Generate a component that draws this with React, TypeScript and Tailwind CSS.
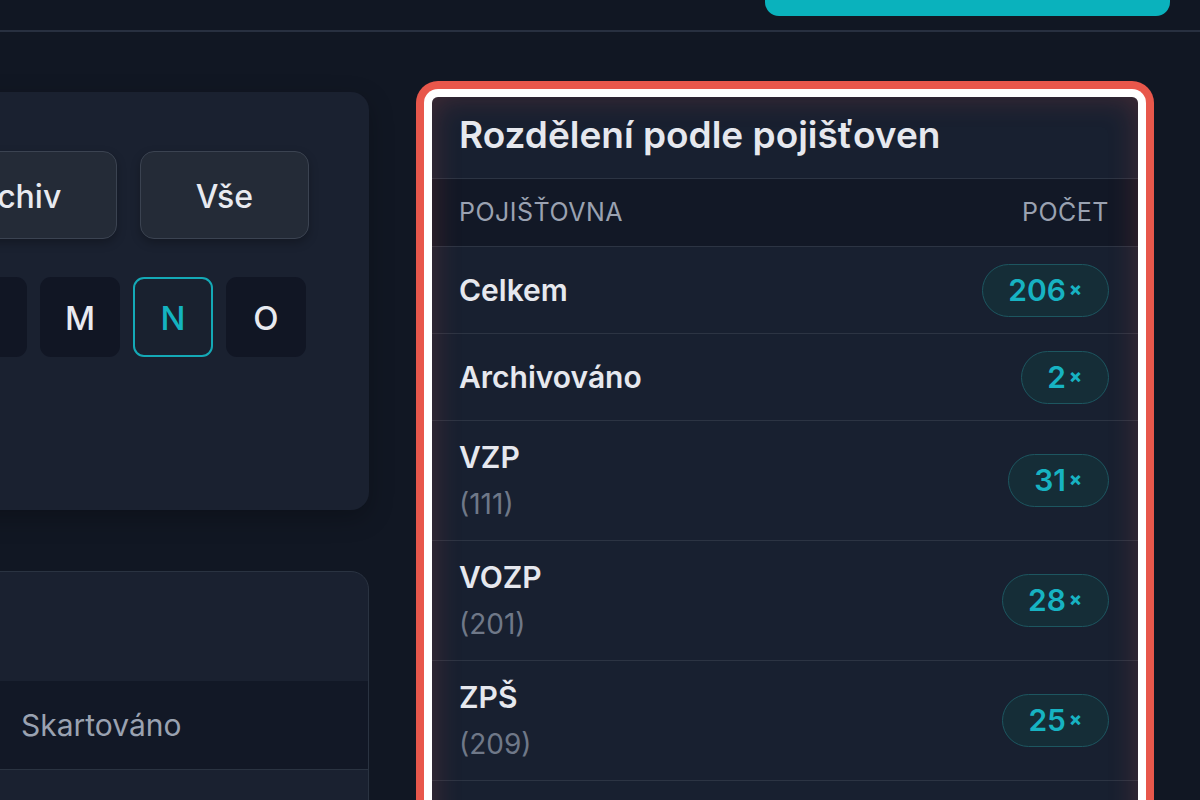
import React from 'react'

const letters = ['H', 'I', 'J', 'K', 'L', 'M', 'N', 'O']

const rows = [
    { name: 'Celkem', count: 206 },
    { name: 'Archivováno', count: 2 },
    { name: 'VZP', code: '111', count: 31 },
    { name: 'VOZP', code: '201', count: 28 },
    { name: 'ZPŠ', code: '209', count: 25 },
    { name: 'OZP', code: '207', count: 22 },
    { name: 'ČPZP', code: '205', count: 19 },
]

const Badge = ({ value }: { value: number }) => (
    <span className="flex h-[53px] items-center rounded-full border-[1.5px] border-[#1d5660] bg-[#152d37] pl-[25px] pr-[26px] text-[30px] font-semibold text-[#17b3c2]">
        {value}
        <span className="ml-[3px] text-[19px] font-extrabold">×</span>
    </span>
)

export default function App() {
    return (
        <div
            className="min-h-screen overflow-hidden bg-[#111723] text-[#e6e8ee]"
            style={{ fontFamily: 'Inter, "Noto Sans", sans-serif' }}
        >
            <header className="flex h-[32px] justify-end border-b-2 border-[#283040] pr-[30px]">
                <button className="-mt-[44px] h-[60px] w-[405px] rounded-[14px] bg-[#0ab2bd]" />
            </header>

            <main className="flex items-start gap-[47px] pt-[49px]">
                {/* left column, mostly cut off */}
                <div className="-ml-[449px] mt-[11px] flex w-[818px] shrink-0 flex-col gap-[61px]">
                    <section className="h-[418px] rounded-[18px] bg-[#1a2130] pl-[24px] pt-[59px] shadow-[0_8px_24px_rgba(0,0,0,0.25)]">
                        <div className="flex gap-[23px]">
                            {['Aktivní', 'Archiv', 'Vše'].map((label, i) => (
                                <button
                                    key={label}
                                    className={`h-[88px] rounded-[14px] border border-[#3b4351] bg-[#242b37] pt-[3px] text-[32px] font-medium text-[#e8eaf0] shadow-[0_4px_10px_rgba(0,0,0,0.25)] ${
                                        i === 0 ? 'w-[309px]' : i === 1 ? 'w-[210px]' : 'w-[169px]'
                                    }`}
                                >
                                    {label}
                                </button>
                            ))}
                        </div>
                        <div className="mt-[38px] flex gap-[13px]">
                            {letters.map((l) => (
                                <div
                                    key={l}
                                    className={`flex h-[80px] w-[80px] items-center justify-center rounded-[11px] pt-[3px] text-[33px] font-medium ${
                                        l === 'N'
                                            ? 'border-2 border-[#14a9b6] bg-[#19212f] text-[#14b3c0]'
                                            : 'bg-[#111624] text-[#e8eaf0]'
                                    }`}
                                >
                                    {l}
                                </div>
                            ))}
                        </div>
                    </section>

                    <section className="overflow-hidden rounded-[18px] border border-[#2a3341] bg-[#1a2130]">
                        <div className="h-[109px]" />
                        <div className="flex h-[88px] items-center bg-[#121826] pl-[24px] text-[30px] text-[#9aa2b1]">
                            <span className="w-[445px]">Pacient</span>
                            <span>Skartováno</span>
                        </div>
                        <div className="h-[80px] border-t border-[#2a3341]" />
                    </section>
                </div>

                {/* right column: highlighted insurer breakdown */}
                <div className="w-[738px] shrink-0 rounded-[22px] bg-[#e8574b] p-[8px]">
                    <div className="rounded-[14px] bg-white p-[8px]">
                        <div className="relative overflow-hidden rounded-[6px] bg-[#182030]">
                            <div className="flex h-[82px] items-center border-b border-[#2c3443] pb-[6px] pl-[27px]">
                                <h2 className="text-[37px] font-semibold text-[#e6e8ee]">
                                    Rozdělení podle pojišťoven
                                </h2>
                            </div>
                            <div className="flex h-[68px] items-center justify-between border-b border-[#2c3443] bg-[#121826] pl-[27px] pr-[29px] text-[25px] tracking-[0.5px] text-[#9aa2b1]">
                                <span>POJIŠŤOVNA</span>
                                <span>POČET</span>
                            </div>
                            {rows.map((r) => (
                                <div
                                    key={r.name}
                                    className={`flex items-center justify-between border-b border-[#2c3443] pl-[27px] pr-[29px] ${
                                        r.code ? 'h-[120px]' : 'h-[87px]'
                                    }`}
                                >
                                    <div className="flex flex-col">
                                        <span className="text-[30px] font-semibold leading-[40px] text-[#e6e8ee]">
                                            {r.name}
                                        </span>
                                        {r.code && (
                                            <span className="mt-[7px] text-[28px] leading-[40px] text-[#6f7888]">
                                                ({r.code})
                                            </span>
                                        )}
                                    </div>
                                    <Badge value={r.count} />
                                </div>
                            ))}
                            <div className="pointer-events-none absolute inset-0 shadow-[inset_0_0_30px_rgba(232,87,75,0.22)]" />
                        </div>
                    </div>
                </div>
            </main>
        </div>
    )
}
